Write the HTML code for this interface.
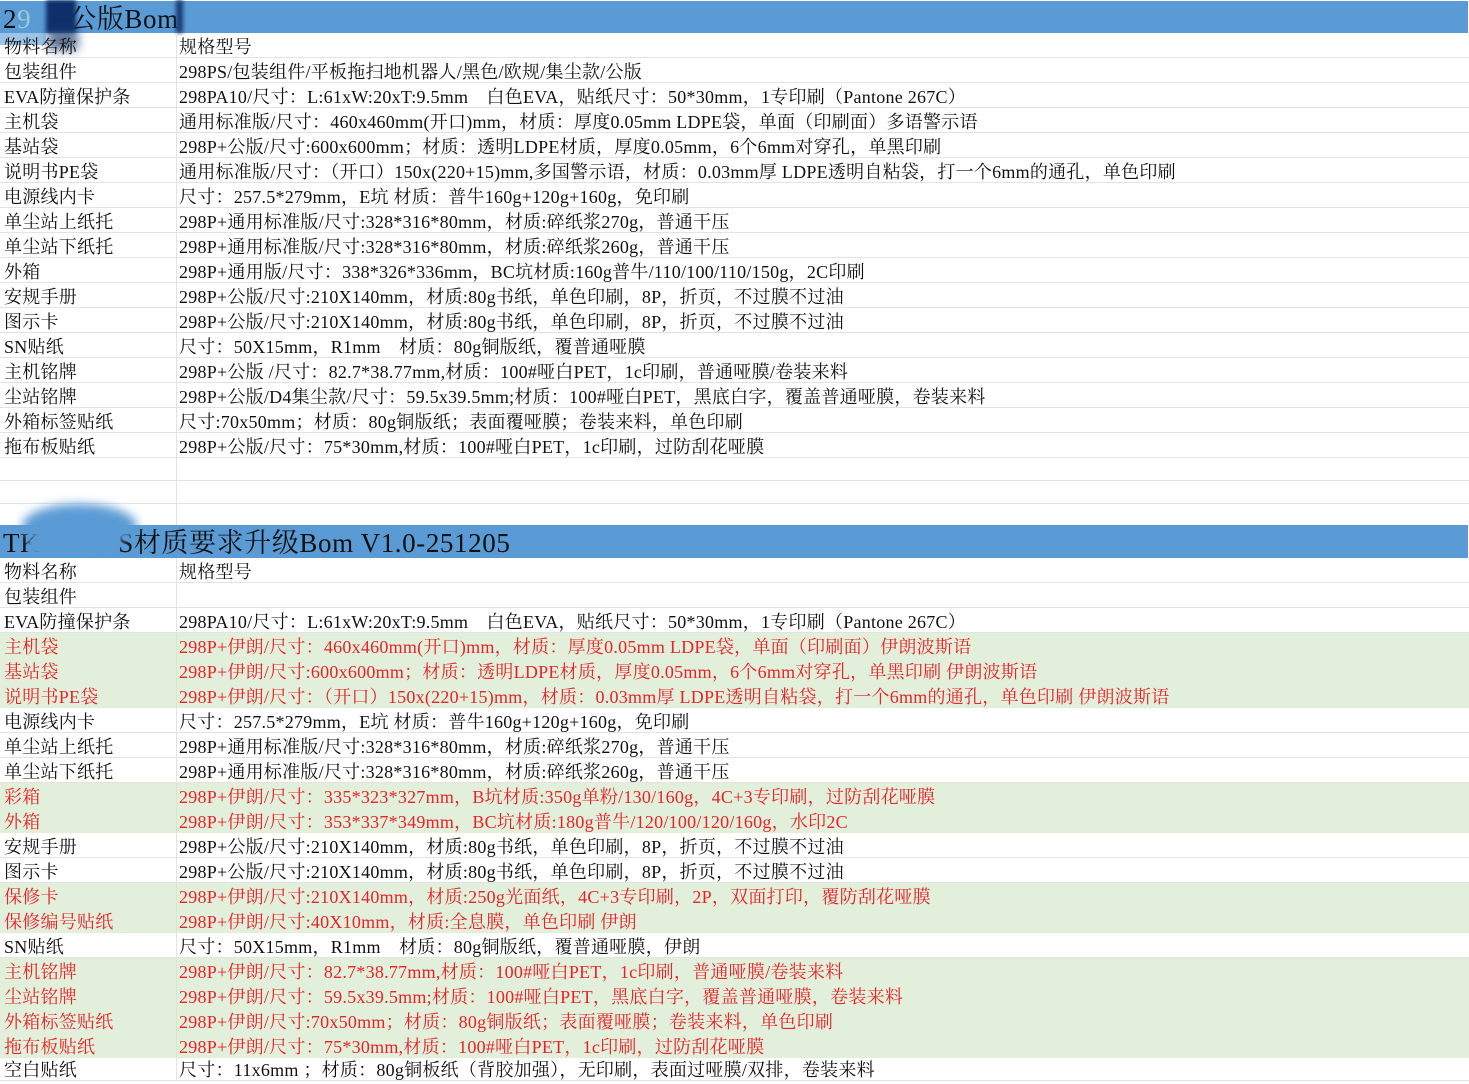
<!DOCTYPE html>
<html><head><meta charset="utf-8"><style>
*{margin:0;padding:0;box-sizing:border-box}
body{width:1469px;height:1080px;overflow:hidden;background:#fff;font-family:"Liberation Serif","Noto Serif CJK SC",serif;font-size:18px;letter-spacing:0.25px;color:#111;position:relative}
.r{position:absolute;left:0;width:1469px;height:25px;border-bottom:1px solid #e3e3e3;line-height:28px;white-space:nowrap}
.r .a{position:absolute;left:4px;top:0}
.r .b{position:absolute;left:179px;top:0}
.r:before{content:"";position:absolute;left:176px;top:0;bottom:-1px;border-left:1px solid #e3e3e3}
.g{background:#e2efda;color:#e8232a;border-bottom-color:#e2efda}
.g:before{border-left-color:#d8e6cf}
.h{position:absolute;left:0;width:1468px;background:#5b9bd5;font-size:27px;letter-spacing:0.6px;line-height:36px;padding-left:3px;color:#111;white-space:nowrap}
</style></head><body>
<div class="h" style="top:1px;height:32px">2<span style="color:#9cc">9</span><span style="display:inline-block;width:38px"></span>公版Bom</div>
<div style="position:absolute;left:46px;top:0;width:30px;height:33px;background:#0e2f68;filter:blur(2px)"></div>
<div style="position:absolute;left:176px;top:0;width:7px;height:33px;background:#1a3a70;filter:blur(2px)"></div>
<div style="position:absolute;left:48px;top:30px;width:30px;height:20px;background:#1a3a70;filter:blur(5px);opacity:.7"></div>
<div style="position:absolute;left:0;top:33px;width:46px;height:12px;background:#5b9bd5;opacity:.6"></div>

<div class="r" style="top:33px"><span class="a">物料名称</span><span class="b">规格型号</span></div>
<div class="r" style="top:58px"><span class="a">包装组件</span><span class="b">298PS/包装组件/平板拖扫地机器人/黑色/欧规/集尘款/公版</span></div>
<div class="r" style="top:83px"><span class="a">EVA防撞保护条</span><span class="b">298PA10/尺寸：L:61xW:20xT:9.5mm　白色EVA，贴纸尺寸：50*30mm，1专印刷（Pantone 267C）</span></div>
<div class="r" style="top:108px"><span class="a">主机袋</span><span class="b">通用标准版/尺寸：460x460mm(开口)mm，材质：厚度0.05mm LDPE袋，单面（印刷面）多语警示语</span></div>
<div class="r" style="top:133px"><span class="a">基站袋</span><span class="b">298P+公版/尺寸:600x600mm；材质：透明LDPE材质，厚度0.05mm，6个6mm对穿孔，单黑印刷</span></div>
<div class="r" style="top:158px"><span class="a">说明书PE袋</span><span class="b">通用标准版/尺寸：（开口）150x(220+15)mm,多国警示语，材质：0.03mm厚 LDPE透明自粘袋，打一个6mm的通孔，单色印刷</span></div>
<div class="r" style="top:183px"><span class="a">电源线内卡</span><span class="b">尺寸：257.5*279mm，E坑 材质：普牛160g+120g+160g，免印刷</span></div>
<div class="r" style="top:208px"><span class="a">单尘站上纸托</span><span class="b">298P+通用标准版/尺寸:328*316*80mm，材质:碎纸浆270g，普通干压</span></div>
<div class="r" style="top:233px"><span class="a">单尘站下纸托</span><span class="b">298P+通用标准版/尺寸:328*316*80mm，材质:碎纸浆260g，普通干压</span></div>
<div class="r" style="top:258px"><span class="a">外箱</span><span class="b">298P+通用版/尺寸：338*326*336mm，BC坑材质:160g普牛/110/100/110/150g，2C印刷</span></div>
<div class="r" style="top:283px"><span class="a">安规手册</span><span class="b">298P+公版/尺寸:210X140mm，材质:80g书纸，单色印刷，8P，折页，不过膜不过油</span></div>
<div class="r" style="top:308px"><span class="a">图示卡</span><span class="b">298P+公版/尺寸:210X140mm，材质:80g书纸，单色印刷，8P，折页，不过膜不过油</span></div>
<div class="r" style="top:333px"><span class="a">SN贴纸</span><span class="b">尺寸：50X15mm，R1mm　材质：80g铜版纸，覆普通哑膜</span></div>
<div class="r" style="top:358px"><span class="a">主机铭牌</span><span class="b">298P+公版 /尺寸：82.7*38.77mm,材质：100#哑白PET，1c印刷，普通哑膜/卷装来料</span></div>
<div class="r" style="top:383px"><span class="a">尘站铭牌</span><span class="b">298P+公版/D4集尘款/尺寸：59.5x39.5mm;材质：100#哑白PET，黑底白字，覆盖普通哑膜，卷装来料</span></div>
<div class="r" style="top:408px"><span class="a">外箱标签贴纸</span><span class="b">尺寸:70x50mm；材质：80g铜版纸；表面覆哑膜；卷装来料，单色印刷</span></div>
<div class="r" style="top:433px"><span class="a">拖布板贴纸</span><span class="b">298P+公版/尺寸：75*30mm,材质：100#哑白PET，1c印刷，过防刮花哑膜</span></div>
<div class="r" style="top:456px"></div>
<div class="r" style="top:479px"></div>
<div class="r" style="top:503px"></div>

<div class="h" style="top:525px;height:33px">TK<span style="display:inline-block;width:78px"></span>S材质要求升级Bom V1.0-251205</div>
<div style="position:absolute;left:22px;top:504px;width:115px;height:44px;border-radius:50%;background:#5b9bd5;filter:blur(5px)"></div>
<div style="position:absolute;left:28px;top:540px;width:86px;height:14px;background:#5b9bd5;filter:blur(2px)"></div>

<div class="r" style="top:558px"><span class="a">物料名称</span><span class="b">规格型号</span></div>
<div class="r" style="top:583px"><span class="a">包装组件</span><span class="b"></span></div>
<div class="r" style="top:608px"><span class="a">EVA防撞保护条</span><span class="b">298PA10/尺寸：L:61xW:20xT:9.5mm　白色EVA，贴纸尺寸：50*30mm，1专印刷（Pantone 267C）</span></div>
<div class="r g" style="top:633px"><span class="a">主机袋</span><span class="b">298P+伊朗/尺寸：460x460mm(开口)mm，材质：厚度0.05mm LDPE袋，单面（印刷面）伊朗波斯语</span></div>
<div class="r g" style="top:658px"><span class="a">基站袋</span><span class="b">298P+伊朗/尺寸:600x600mm；材质：透明LDPE材质，厚度0.05mm，6个6mm对穿孔，单黑印刷 伊朗波斯语</span></div>
<div class="r g" style="top:683px"><span class="a">说明书PE袋</span><span class="b">298P+伊朗/尺寸：（开口）150x(220+15)mm，材质：0.03mm厚 LDPE透明自粘袋，打一个6mm的通孔，单色印刷 伊朗波斯语</span></div>
<div class="r" style="top:708px"><span class="a">电源线内卡</span><span class="b">尺寸：257.5*279mm，E坑 材质：普牛160g+120g+160g，免印刷</span></div>
<div class="r" style="top:733px"><span class="a">单尘站上纸托</span><span class="b">298P+通用标准版/尺寸:328*316*80mm，材质:碎纸浆270g，普通干压</span></div>
<div class="r" style="top:758px"><span class="a">单尘站下纸托</span><span class="b">298P+通用标准版/尺寸:328*316*80mm，材质:碎纸浆260g，普通干压</span></div>
<div class="r g" style="top:783px"><span class="a">彩箱</span><span class="b">298P+伊朗/尺寸：335*323*327mm，B坑材质:350g单粉/130/160g，4C+3专印刷，过防刮花哑膜</span></div>
<div class="r g" style="top:808px"><span class="a">外箱</span><span class="b">298P+伊朗/尺寸：353*337*349mm，BC坑材质:180g普牛/120/100/120/160g，水印2C</span></div>
<div class="r" style="top:833px"><span class="a">安规手册</span><span class="b">298P+公版/尺寸:210X140mm，材质:80g书纸，单色印刷，8P，折页，不过膜不过油</span></div>
<div class="r" style="top:858px"><span class="a">图示卡</span><span class="b">298P+公版/尺寸:210X140mm，材质:80g书纸，单色印刷，8P，折页，不过膜不过油</span></div>
<div class="r g" style="top:883px"><span class="a">保修卡</span><span class="b">298P+伊朗/尺寸:210X140mm，材质:250g光面纸，4C+3专印刷，2P，双面打印，覆防刮花哑膜</span></div>
<div class="r g" style="top:908px"><span class="a">保修编号贴纸</span><span class="b">298P+伊朗/尺寸:40X10mm，材质:全息膜，单色印刷 伊朗</span></div>
<div class="r" style="top:933px"><span class="a">SN贴纸</span><span class="b">尺寸：50X15mm，R1mm　材质：80g铜版纸，覆普通哑膜，伊朗</span></div>
<div class="r g" style="top:958px"><span class="a">主机铭牌</span><span class="b">298P+伊朗/尺寸：82.7*38.77mm,材质：100#哑白PET，1c印刷，普通哑膜/卷装来料</span></div>
<div class="r g" style="top:983px"><span class="a">尘站铭牌</span><span class="b">298P+伊朗/尺寸：59.5x39.5mm;材质：100#哑白PET，黑底白字，覆盖普通哑膜，卷装来料</span></div>
<div class="r g" style="top:1008px"><span class="a">外箱标签贴纸</span><span class="b">298P+伊朗/尺寸:70x50mm；材质：80g铜版纸；表面覆哑膜；卷装来料，单色印刷</span></div>
<div class="r g" style="top:1033px"><span class="a">拖布板贴纸</span><span class="b">298P+伊朗/尺寸：75*30mm,材质：100#哑白PET，1c印刷，过防刮花哑膜</span></div>
<div class="r" style="top:1056px"><span class="a">空白贴纸</span><span class="b">尺寸：11x6mm ；材质：80g铜板纸（背胶加强），无印刷，表面过哑膜/双排，卷装来料</span></div>
</body></html>
